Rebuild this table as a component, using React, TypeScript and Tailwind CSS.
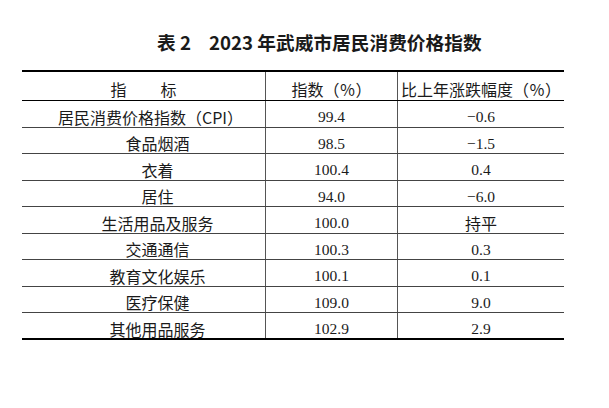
const rows = [
  { name: "居民消费价格指数（CPI）", index: "99.4", change: "−0.6", pad: "pl-[14px]" },
  { name: "食品烟酒", index: "98.5", change: "−1.5" },
  { name: "衣着", index: "100.4", change: "0.4" },
  { name: "居住", index: "94.0", change: "−6.0" },
  { name: "生活用品及服务", index: "100.0", change: "持平" },
  { name: "交通通信", index: "100.3", change: "0.3" },
  { name: "教育文化娱乐", index: "100.1", change: "0.1" },
  { name: "医疗保健", index: "109.0", change: "9.0" },
  { name: "其他用品服务", index: "102.9", change: "2.9" },
];

const cjk = "font-['Noto_Sans_CJK_SC',sans-serif] text-[16px]";
const num = "font-['Liberation_Serif','Noto_Sans_CJK_SC',serif] text-[15.5px]";

function Cell({
  children,
  className = "",
}: {
  children: React.ReactNode;
  className?: string;
}) {
  return (
    <div className={`flex items-center justify-center pt-[6px] leading-none ${className}`}>
      {children}
    </div>
  );
}

export default function App() {
  return (
    <div className="h-[408px] w-[609px] bg-white text-[#1a1a1a] [text-spacing-trim:space-all]">
      <div className="pl-[157px] pt-[28px] font-['Noto_Sans_CJK_SC',sans-serif] text-[18.7px] font-bold leading-[28px]">
        <span>表 2</span>
        <span className="ml-[18px]">2023 年武威市居民消费价格指数</span>
      </div>

      <div className="mt-[14px] ml-[22px] w-[542px] border-t-[2px] border-b-[2.5px] border-black">
        <div className="grid h-[29px] grid-cols-[244px_132px_166px] border-b border-black">
          <Cell className={`border-r border-[#555] ${cjk}`}>
            <span>指</span>
            <span className="ml-[34px]">标</span>
          </Cell>
          <Cell className={`border-r border-[#555] ${cjk}`}>指数（％）</Cell>
          <Cell className={cjk}>比上年涨跌幅度（％）</Cell>
        </div>
        {rows.map((r, i) => (
          <div
            key={r.name}
            className={`grid grid-cols-[244px_132px_166px] ${
              i < rows.length - 1 ? "h-[26.5px] border-b border-[#444]" : "h-[25px]"
            }`}
          >
            <Cell className={`border-r border-[#555] ${r.pad ?? "pl-[28px]"} ${cjk}`}>
              {r.name}
            </Cell>
            <Cell className={`border-r border-[#555] ${num}`}>{r.index}</Cell>
            <Cell className={r.change === "持平" ? cjk : num}>{r.change}</Cell>
          </div>
        ))}
      </div>
    </div>
  );
}
